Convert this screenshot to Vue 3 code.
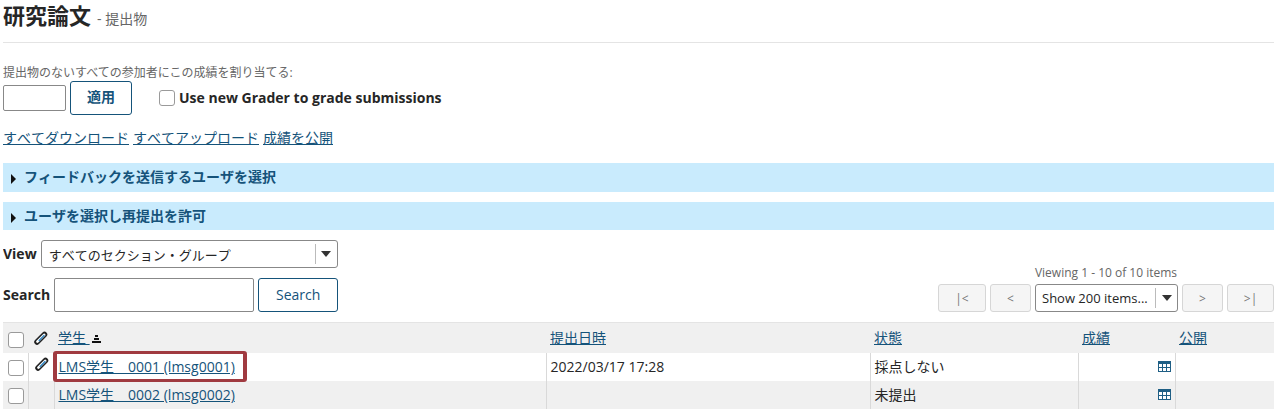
<template>
  <div class="page">
    <header class="title">
      <h1>研究論文</h1>
      <small>- 提出物</small>
    </header>

    <p class="assign-label">提出物のないすべての参加者にこの成績を割り当てる:</p>
    <div class="assign-row">
      <input class="grade-input" type="text" />
      <button class="btn apply">適用</button>
      <label class="grader">
        <span class="box"></span>
        <span class="grader-text">Use new Grader to grade submissions</span>
      </label>
    </div>

    <div class="actions">
      <a>すべてダウンロード</a>
      <a>すべてアップロード</a>
      <a>成績を公開</a>
    </div>

    <div v-for="bar in bars" :key="bar" class="bar">
      <span class="caret"></span>
      <span>{{ bar }}</span>
    </div>

    <div class="toolbar">
      <div class="filters">
        <div class="filter view">
          <b>View</b>
          <div class="select wide">
            <span class="select-text">すべてのセクション・グループ</span>
            <span class="select-arrow"><i></i></span>
          </div>
        </div>
        <div class="filter search">
          <b>Search</b>
          <input class="search-input" type="text" />
          <button class="btn search-btn">Search</button>
        </div>
      </div>
      <div class="pager-wrap">
        <div class="viewing">Viewing 1 - 10 of 10 items</div>
        <div class="pager">
          <button class="page-btn first">|&lt;</button>
          <button class="page-btn prev">&lt;</button>
          <div class="select show">
            <span class="select-text">Show 200 items...</span>
            <span class="select-arrow"><i></i></span>
          </div>
          <button class="page-btn prev">&gt;</button>
          <button class="page-btn last">&gt;|</button>
        </div>
      </div>
    </div>

    <table>
      <colgroup>
        <col style="width: 25px" />
        <col style="width: 26px" />
        <col style="width: 492px" />
        <col style="width: 324px" />
        <col style="width: 208px" />
        <col style="width: 97px" />
        <col />
      </colgroup>
      <thead>
        <tr>
          <th><span class="box"></span></th>
          <th class="clip-cell">
            <svg class="clip" viewBox="0 0 14 14">
              <path d="M3 11 L10.5 3.5" stroke="#222" stroke-width="5.5" stroke-linecap="round" />
              <path d="M3.4 10.6 L10.2 3.8" stroke="#fff" stroke-width="2.6" stroke-linecap="round" />
              <path d="M5.2 9.4 L10 4.6" stroke="#2f86c4" stroke-width="1.4" stroke-linecap="round" />
            </svg>
          </th>
          <th><a>学生 </a><span class="sort"><i></i><i></i><i></i></span></th>
          <th><a>提出日時</a></th>
          <th><a>状態</a></th>
          <th><a>成績</a></th>
          <th><a>公開</a></th>
        </tr>
      </thead>
      <tbody>
        <tr v-for="row in rows" :key="row.id" :class="{ alt: row.alt }">
          <td><span class="box"></span></td>
          <td class="clip-cell">
            <svg v-if="row.clip" class="clip" viewBox="0 0 14 14">
              <path d="M3 11 L10.5 3.5" stroke="#222" stroke-width="5.5" stroke-linecap="round" />
              <path d="M3.4 10.6 L10.2 3.8" stroke="#fff" stroke-width="2.6" stroke-linecap="round" />
              <path d="M5.2 9.4 L10 4.6" stroke="#2f86c4" stroke-width="1.4" stroke-linecap="round" />
            </svg>
          </td>
          <td class="student"><a :class="{ marked: row.clip }">{{ row.name }}</a></td>
          <td>{{ row.date }}</td>
          <td>{{ row.status }}</td>
          <td class="grade">
            <svg class="grid-icon" viewBox="0 0 13 11"><path d="M0 0h13v11H0z" fill="#1f5f85" /><path d="M1 3h3v3H1zM5 3h3v3H5zM9 3h3v3H9zM1 7h3v3H1zM5 7h3v3H5zM9 7h3v3H9z" fill="#fff" /></svg>
          </td>
          <td></td>
        </tr>
      </tbody>
    </table>
  </div>
</template>

<script setup>
const bars = ['フィードバックを送信するユーザを選択', 'ユーザを選択し再提出を許可']

const rows = [
  { id: 1, name: 'LMS学生　0001 (lmsg0001)', date: '2022/03/17 17:28', status: '採点しない', clip: true },
  { id: 2, name: 'LMS学生　0002 (lmsg0002)', date: '', status: '未提出', clip: false, alt: true }
]
</script>

<style>
html,
body {
  margin: 0;
  background: #fff;
  overflow: hidden;
}
</style>

<style scoped>
.page {
  width: 1271px;
  height: 410px;
  margin-left: 3px;
  overflow: hidden;
  font-family: "Open Sans", "Noto Sans CJK JP", sans-serif;
  font-size: 14px;
  color: #262626;
  font-kerning: none;
}

a {
  color: #15537a;
  text-decoration: underline;
}

.title {
  display: flex;
  align-items: baseline;
  height: 42px;
  border-bottom: 1px solid #e4e4e4;
}

.title h1 {
  margin: 0;
  font-size: 22px;
  line-height: 30px;
  font-weight: 700;
  color: #262626;
}

.title small {
  margin-left: 6px;
  font-size: 14px;
  color: #666;
}

.assign-label {
  margin: 21px 0 0;
  font-size: 12px;
  line-height: 18px;
  color: #666;
  font-kerning: auto;
}

.assign-row {
  display: flex;
  align-items: center;
  height: 34px;
  margin-top: -1px;
}

.grade-input {
  width: 63px;
  height: 26px;
  box-sizing: border-box;
  border: 1px solid #888;
  border-radius: 2px;
  padding: 0;
}

.btn {
  box-sizing: border-box;
  background: #fff;
  border: 1px solid #15537a;
  border-radius: 3px;
  color: #15537a;
  font-family: inherit;
  font-size: 14px;
  padding: 0 0 2px;
}

.apply {
  width: 62px;
  height: 34px;
  margin-left: 4px;
  font-weight: 600;
  padding-bottom: 4px;
}

.grader {
  display: flex;
  align-items: center;
  margin-left: 27px;
  font-weight: 700;
  font-size: 14px;
  gap: 4px;
}

.grader-text {
  padding-bottom: 2px;
}

.box {
  display: inline-block;
  width: 16px;
  height: 16px;
  box-sizing: border-box;
  border: 1px solid #9a9a9a;
  border-radius: 3px;
  background: #fff;
  vertical-align: middle;
}

.actions {
  display: flex;
  gap: 4px;
  margin-top: 13px;
  height: 20px;
  line-height: 20px;
}

.bar {
  display: flex;
  align-items: center;
  box-sizing: border-box;
  height: 28px;
  margin-top: 10px;
  padding-bottom: 2px;
  background: #c9ebfd;
  color: #15537a;
  font-size: 14px;
  font-weight: 700;
}

.actions + .bar {
  margin-top: 15px;
  height: 29px;
  padding-bottom: 3px;
}

.caret {
  width: 0;
  height: 0;
  margin: 6px 8px 0 8px;
  border-left: 5px solid #111;
  border-top: 5px solid transparent;
  border-bottom: 5px solid transparent;
}

.toolbar {
  display: flex;
  justify-content: space-between;
  align-items: flex-end;
  margin-top: 10px;
}

.filter {
  display: flex;
  align-items: center;
}

.filter b {
  font-weight: 700;
  font-size: 14px;
  padding-bottom: 2px;
}

.view {
  height: 28px;
  gap: 4px;
}

.search {
  height: 34px;
  margin-top: 10px;
}

.select {
  display: flex;
  align-items: center;
  box-sizing: border-box;
  height: 28px;
  background: #fff;
  border: 1px solid #888;
  border-radius: 3px;
  color: #262626;
  font-size: 13px;
}

.wide {
  width: 297px;
}

.wide .select-text {
  padding-left: 7px;
}

.show {
  width: 143px;
  height: 28px;
}

.select-text {
  flex: 1;
  padding-left: 6px;
  white-space: nowrap;
  overflow: hidden;
}

.select-arrow {
  display: flex;
  align-items: center;
  justify-content: center;
  width: 21px;
  height: 20px;
  border-left: 1px solid #bbb;
}

.select-arrow i {
  width: 0;
  height: 0;
  border-top: 6px solid #333;
  border-left: 5px solid transparent;
  border-right: 5px solid transparent;
}

.search-input {
  width: 200px;
  height: 34px;
  box-sizing: border-box;
  margin-left: 4px;
  border: 1px solid #888;
  border-radius: 2px;
  padding: 0;
}

.search-btn {
  width: 80px;
  height: 34px;
  margin-left: 4px;
}

.pager-wrap {
  display: flex;
  flex-direction: column;
  align-items: center;
}

.viewing {
  font-size: 12px;
  line-height: 18px;
  color: #666;
  margin-bottom: 2px;
  width: 100%;
  text-align: center;
}

.pager {
  display: flex;
  gap: 4px;
  height: 28px;
}

.page-btn {
  box-sizing: border-box;
  height: 28px;
  border: 1px solid #d6d6d6;
  border-radius: 3px;
  background: #f5f5f5;
  color: #777;
  font-family: inherit;
  font-size: 12px;
  padding: 0;
}

.first {
  width: 48px;
}

.prev {
  width: 41px;
}

.last {
  width: 47px;
}

table {
  width: 1271px;
  margin-top: 10px;
  border-collapse: collapse;
  table-layout: fixed;
}

th {
  height: 30px;
  padding: 0 4px;
  background: #f0f0f0;
  border-top: 1px solid #e4e4e4;
  font-weight: 400;
  text-align: left;
}

th:nth-child(n + 3) {
  height: 28px;
  padding-bottom: 2px;
}

td {
  height: 28px;
  padding: 0 4px;
  border-left: 1px solid #d9d9d9;
  line-height: 20px;
}

td:first-child,
th:first-child {
  border-left: 0;
  text-align: center;
}

th:first-child,
td:first-child {
  padding: 0 0 0 1px;
}

tr.alt td {
  background: #f0f0f0;
}

.clip-cell {
  padding: 0 0 0 6px;
}

.clip {
  display: block;
  width: 14px;
  height: 14px;
}

td.clip-cell .clip {
  margin-top: -6px;
}

.sort {
  display: inline-flex;
  flex-direction: column;
  align-items: center;
  gap: 1px;
  margin-left: 2px;
  vertical-align: middle;
}

.sort i {
  display: block;
  height: 2px;
  background: #111;
}

.sort i:nth-child(1) {
  width: 3px;
}

.sort i:nth-child(2) {
  width: 5px;
}

.sort i:nth-child(3) {
  width: 9px;
}

.student a.marked {
  position: relative;
}

.student a.marked::after {
  content: "";
  position: absolute;
  left: -6px;
  right: -12px;
  top: -6px;
  bottom: -6px;
  border-style: solid;
  border-color: #a03a40;
  border-width: 3px 4px;
  border-radius: 3px;
}

.grade {
  text-align: right;
  padding-right: 4px;
}

.grid-icon {
  width: 13px;
  height: 11px;
  vertical-align: middle;
  margin-top: -4px;
}
</style>
